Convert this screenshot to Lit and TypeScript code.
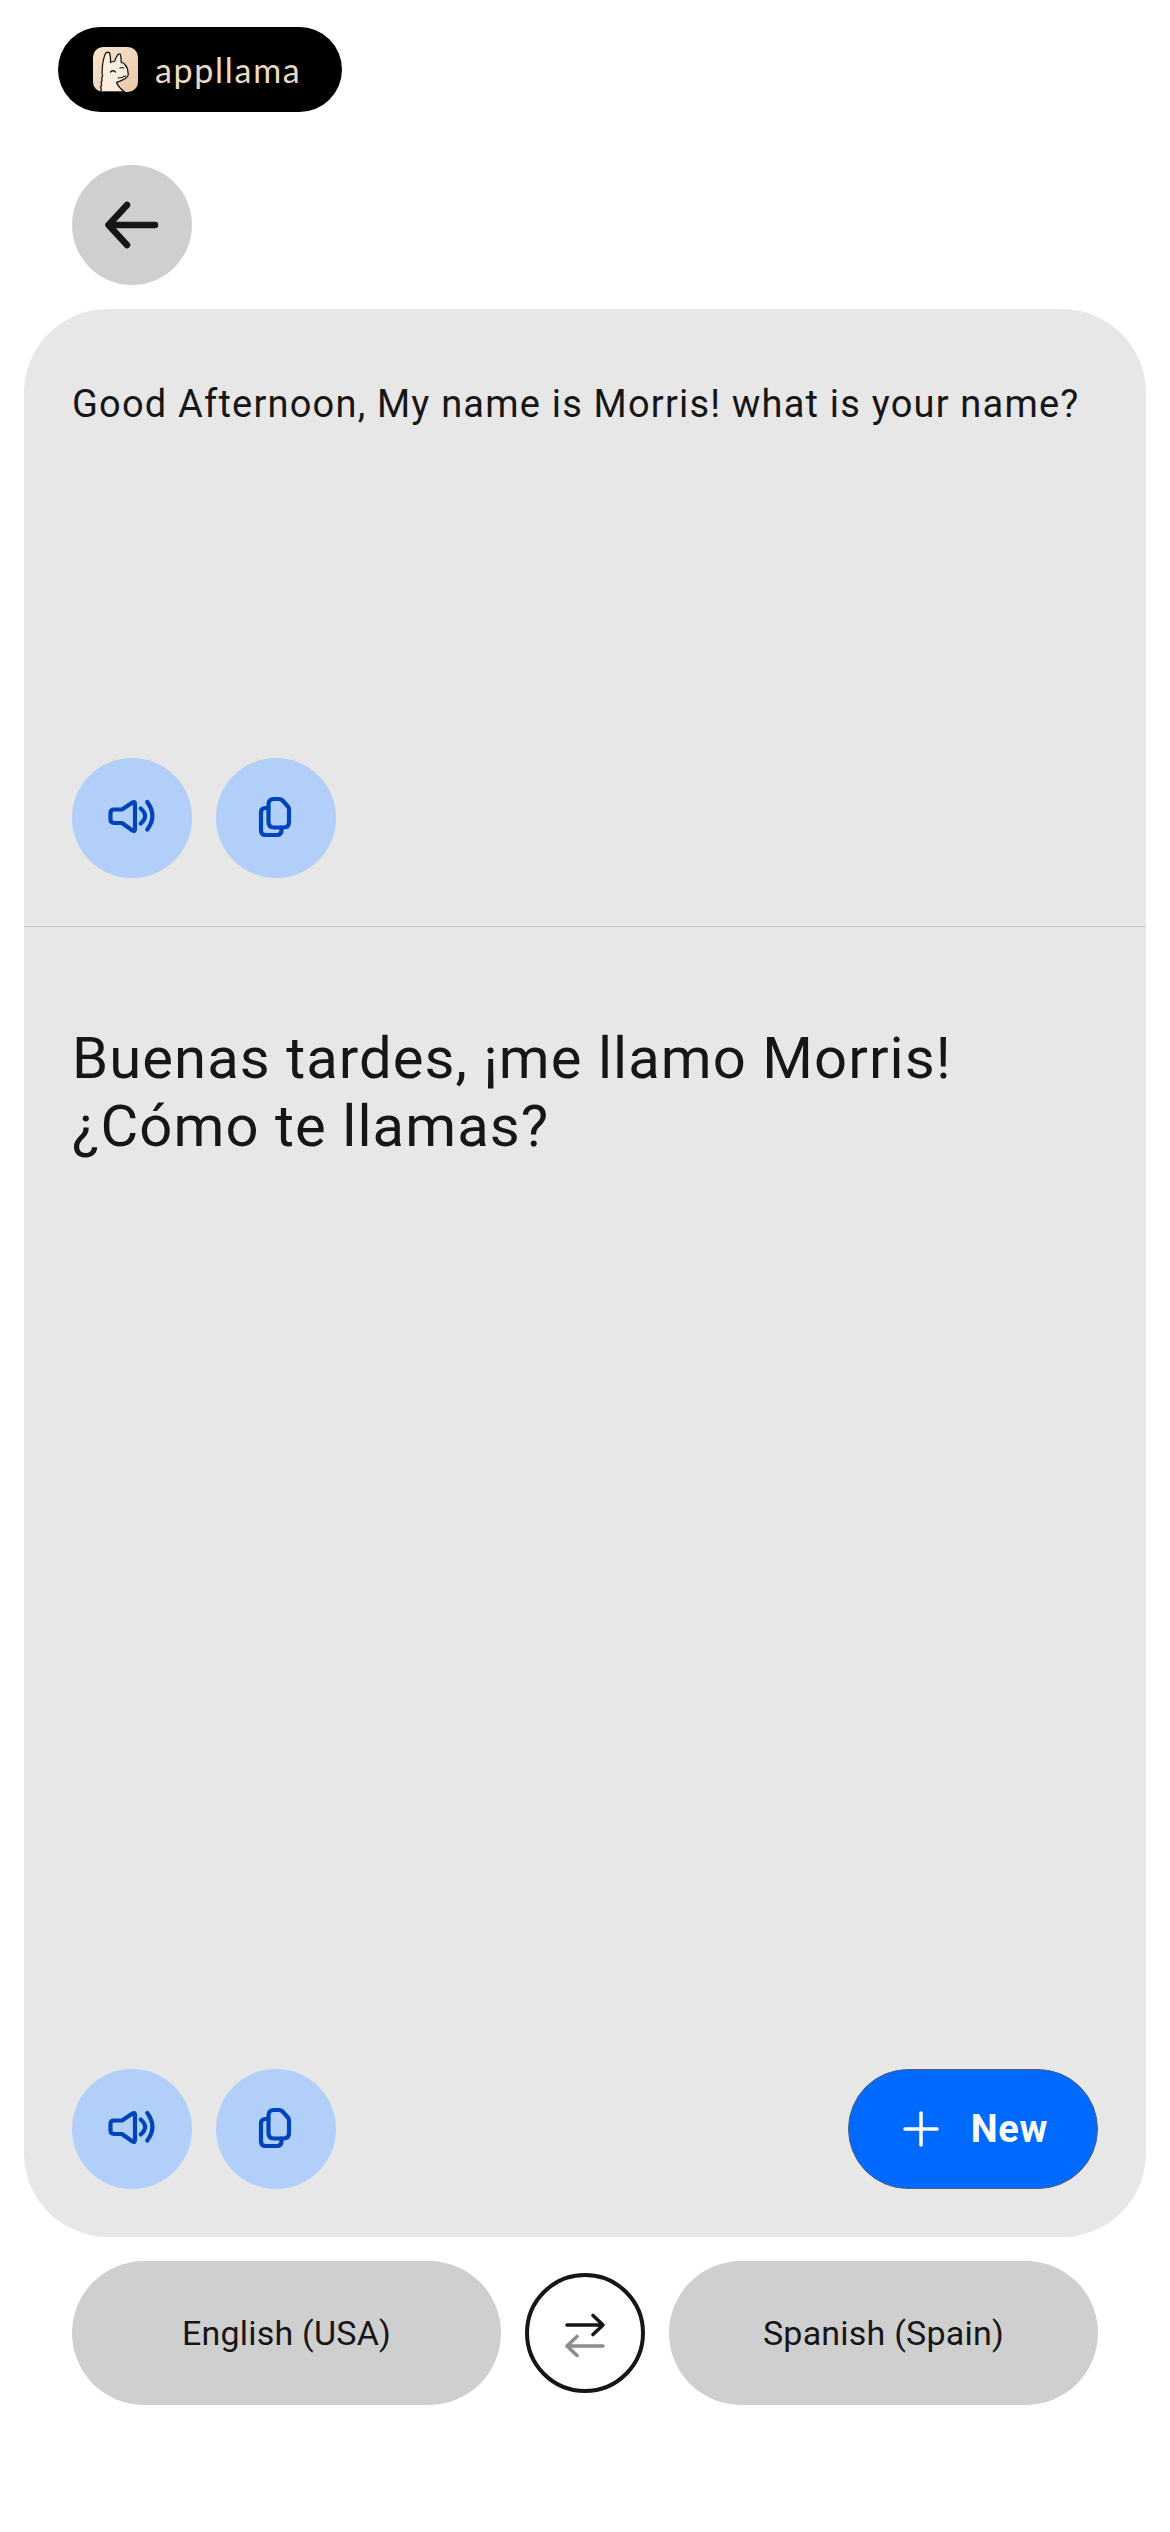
import { LitElement, css, html, svg } from 'lit';
import { customElement } from 'lit/decorators.js';

const speakerIcon = svg`
  <path d="M20 21.500 30.500 14.500Q33 13 33 16V41Q33 44 30.500 42.500L20 35H12Q8.500 35 8.500 31.500V25Q8.500 21.500 12 21.500Z" />
  <path d="M38.700 20.500Q47.500 28 38.700 35.500" />
  <path d="M45.300 14Q55.500 28 45.300 41.500" />
`;
const copyIcon = svg`
  <path d="M28 11H33Q35 11 36.500 12.500L41.500 18Q43 19.500 43 21.500V34Q43 39.500 37.500 39.500H28Q22.500 39.500 22.500 34V16.500Q22.500 11 28 11Z" />
  <path d="M22.500 20H19.500Q15 20 15 24.500V42.500Q15 47 19.500 47H31Q35.500 47 35.500 42.500V39.500" />
`;

@customElement('app-root')
export class AppRoot extends LitElement {
  static styles = css`
    :host {
      display: block;
      width: 1170px;
      height: 2532px;
      background: #ffffff;
      font-family: Roboto, "Liberation Sans", sans-serif;
      color: #161616;
      overflow: hidden;
    }
    .top {
      padding: 27px 0 0 58px;
    }
    .brand {
      display: flex;
      align-items: center;
      gap: 17px;
      width: 284px;
      height: 85px;
      box-sizing: border-box;
      padding-left: 35px;
      border-radius: 43px;
      background: #000000;
    }
    .brand-mark {
      width: 45px;
      height: 45px;
      flex: none;
    }
    .brand-name {
      font-family: Lato, sans-serif;
      font-weight: 400;
      font-size: 34px;
      letter-spacing: 1.7px;
      color: #ecd9c4;
    }
    .back {
      display: flex;
      align-items: center;
      justify-content: center;
      width: 120px;
      height: 120px;
      margin: 53px 0 24px 72px;
      border-radius: 50%;
      background: #cfcfcf;
    }
    .back svg {
      width: 60px;
      height: 60px;
    }
    .card {
      display: flex;
      flex-direction: column;
      width: 1122px;
      height: 1928px;
      margin-left: 24px;
      border-radius: 84px;
      background: #e7e7e7;
    }
    .source {
      display: flex;
      flex-direction: column;
      justify-content: space-between;
      height: 618px;
      box-sizing: border-box;
      padding: 73px 48px 48px;
      border-bottom: 1px solid #c6c6c6;
    }
    .source p {
      margin: 0;
      font-size: 38px;
      line-height: 44px;
      letter-spacing: 1.2px;
      white-space: nowrap;
    }
    .target {
      flex: 1;
      display: flex;
      flex-direction: column;
      justify-content: space-between;
      box-sizing: border-box;
      padding: 97px 48px 48px;
    }
    .target p {
      margin: 0;
      font-size: 58px;
      line-height: 68px;
      letter-spacing: 1.06px;
    }
    .actions {
      display: flex;
      align-items: center;
      gap: 24px;
    }
    .round {
      display: flex;
      align-items: center;
      justify-content: center;
      width: 120px;
      height: 120px;
      border-radius: 50%;
      background: #b2cffa;
    }
    .round svg {
      width: 60px;
      height: 60px;
      fill: none;
      stroke: #0044bb;
      stroke-width: 4.2;
      stroke-linecap: round;
      stroke-linejoin: round;
    }
    .new {
      display: flex;
      align-items: center;
      justify-content: center;
      gap: 32px;
      width: 250px;
      height: 120px;
      margin-left: auto;
      padding-left: 5px;
      box-sizing: border-box;
      border: 1px solid #4c5f80;
      border-radius: 60px;
      background: #0069ff;
      color: #ffffff;
      font-size: 38px;
      font-weight: 700;
      letter-spacing: 0.8px;
    }
    .new svg {
      width: 36px;
      height: 36px;
    }
    .langs {
      display: flex;
      align-items: center;
      gap: 24px;
      padding: 24px 72px 0;
    }
    .lang {
      flex: 1;
      display: flex;
      align-items: center;
      justify-content: center;
      height: 144px;
      border-radius: 72px;
      background: #cfcfcf;
      font-size: 34px;
      letter-spacing: 0.22px;
    }
    .swap {
      display: flex;
      align-items: center;
      justify-content: center;
      flex: none;
      width: 120px;
      height: 120px;
      box-sizing: border-box;
      border: 4px solid #161616;
      border-radius: 50%;
    }
    .swap svg {
      width: 48px;
      height: 48px;
    }
  `;

  private actionButtons() {
    return html`
      <div class="round"><svg viewBox="0 0 60 60">${speakerIcon}</svg></div>
      <div class="round"><svg viewBox="0 0 60 60">${copyIcon}</svg></div>
    `;
  }

  render() {
    return html`
      <div class="top">
        <div class="brand">
          <svg class="brand-mark" viewBox="0 0 45 45">
            <defs>
              <linearGradient id="tile" x1="0" y1="0" x2="1" y2="1">
                <stop offset="0" stop-color="#f9e6d2" />
                <stop offset="1" stop-color="#e6c7a6" />
              </linearGradient>
            </defs>
            <rect width="45" height="45" rx="10" fill="url(#tile)" />
            <path
              d="M7.500 45Q9 42 7.500 40Q9.500 38 8 35.500Q10 33.500 8.500 31Q10.500 29 9 26.500L9.300 22Q9.500 13 12.700 6Q15 4.500 16.700 6Q17.800 11 17.500 15.500L21.700 14Q23 10 25 7.300Q27 6.500 27.300 7.300Q28.300 11 28.300 15.700Q30.500 15.500 31.700 17.300Q35 21 35 25.700Q36 28.500 33.500 30.500Q31 33 23.500 35.300Q25 40 31.700 45Z"
              fill="#fbeee0"
              stroke="#1d1915"
              stroke-width="1.300"
              stroke-linejoin="round"
            />
            <path
              d="M17.500 25Q20 22.500 22.500 25M27 21Q29 20 30.500 21M25 31Q29 31 32.500 29"
              fill="none"
              stroke="#1d1915"
              stroke-width="1.200"
              stroke-linecap="round"
            />
          </svg>
          <span class="brand-name">appllama</span>
        </div>
      </div>
      <div class="back">
        <svg viewBox="0 0 60 60" fill="none" stroke="#161616" stroke-width="6.500" stroke-linecap="round" stroke-linejoin="round">
          <path d="M53 30H7M25 10 6.500 30 25 50" />
        </svg>
      </div>
      <div class="card">
        <div class="source">
          <p>Good Afternoon, My name is Morris! what is your name?</p>
          <div class="actions">${this.actionButtons()}</div>
        </div>
        <div class="target">
          <p>Buenas tardes, ¡me llamo Morris!<br />¿Cómo te llamas?</p>
          <div class="actions">
            ${this.actionButtons()}
            <div class="new">
              <svg viewBox="0 0 36 36" fill="none" stroke="#ffffff" stroke-width="3.500" stroke-linecap="round">
                <path d="M18 2v32M2 18h32" />
              </svg>
              <span>New</span>
            </div>
          </div>
        </div>
      </div>
      <div class="langs">
        <div class="lang">English (USA)</div>
        <div class="swap">
          <svg viewBox="0 0 48 48" fill="none" stroke-width="3.600" stroke-linecap="round" stroke-linejoin="round">
            <path d="M6 16H42M32 6.500 42 16 32 25.500" stroke="#161616" />
            <path d="M42 37H6M16 27.500 6 37 16 46.500" stroke="#8d8d8d" />
          </svg>
        </div>
        <div class="lang">Spanish (Spain)</div>
      </div>
    `;
  }
}
